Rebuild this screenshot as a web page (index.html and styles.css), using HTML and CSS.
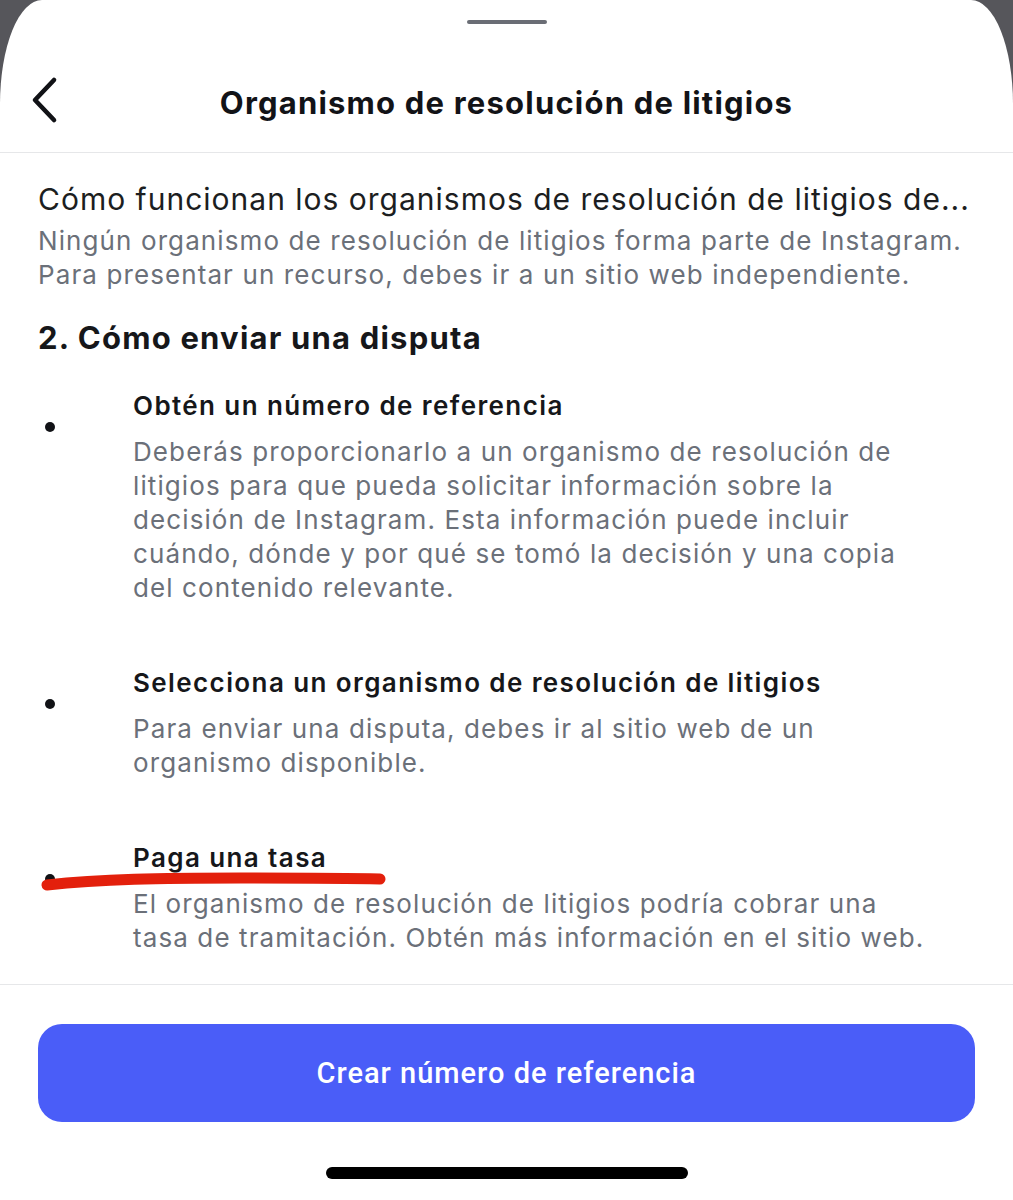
FILE: index.html
```html
<!DOCTYPE html>
<html lang="es">
<head>
<meta charset="utf-8">
<title>Organismo de resolución de litigios</title>
<link rel="stylesheet" href="styles.css">
</head>
<body>
<div class="sheet">
  <div class="grabber"></div>
  <header class="header">
    <button class="back" aria-label="Atrás">
      <svg width="30" height="48" viewBox="0 0 30 48"><path d="M24 4 L5 24 L24 44" fill="none" stroke="#111216" stroke-width="4.6" stroke-linecap="round" stroke-linejoin="round"/></svg>
    </button>
    <h1 class="title">Organismo de resolución de litigios</h1>
  </header>
  <main class="content">
    <p class="lead">Cómo funcionan los organismos de resolución de litigios de...</p>
    <p class="sub">Ningún organismo de resolución de litigios forma parte de Instagram.<br>Para presentar un recurso, debes ir a un sitio web independiente.</p>
    <h2 class="section">2. Cómo enviar una disputa</h2>
    <ul class="steps">
      <li class="step">
        <span class="dot"></span>
        <div class="step-body">
          <h3 class="step-title">Obtén un número de referencia</h3>
          <p class="step-text">Deberás proporcionarlo a un organismo de resolución de<br>litigios para que pueda solicitar información sobre la<br>decisión de Instagram. Esta información puede incluir<br>cuándo, dónde y por qué se tomó la decisión y una copia<br>del contenido relevante.</p>
        </div>
      </li>
      <li class="step">
        <span class="dot"></span>
        <div class="step-body">
          <h3 class="step-title">Selecciona un organismo de resolución de litigios</h3>
          <p class="step-text">Para enviar una disputa, debes ir al sitio web de un<br>organismo disponible.</p>
        </div>
      </li>
      <li class="step">
        <span class="dot"></span>
        <div class="step-body">
          <h3 class="step-title">Paga una tasa</h3>
          <p class="step-text">El organismo de resolución de litigios podría cobrar una<br>tasa de tramitación. Obtén más información en el sitio web.</p>
        </div>
        <svg class="scribble" width="345" height="22" viewBox="0 0 345 22"><path d="M6 15 C 60 9, 120 8, 200 8 S 300 8, 339 9" fill="none" stroke="#e3200c" stroke-width="11" stroke-linecap="round"/></svg>
      </li>
    </ul>
  </main>
  <footer class="footer">
    <button class="cta">Crear número de referencia</button>
    <div class="home"></div>
  </footer>
</div>
</body>
</html>
```
FILE: styles.css
```css
html, body {
  margin: 0;
  padding: 0;
  background: #56565b;
}
.sheet {
  width: 1013px;
  height: 1200px;
  background: #ffffff;
  border-top-left-radius: 42px 104px;
  border-top-right-radius: 42px 104px;
  overflow: hidden;
  display: flex;
  flex-direction: column;
  font-family: Inter, "Noto Sans", sans-serif;
  color: #1c1e21;
}
.grabber {
  width: 80px;
  height: 4px;
  border-radius: 2px;
  background: #6a6d75;
  margin: 20px auto 0;
}
.header {
  position: relative;
  height: 128px;
  display: flex;
  align-items: center;
  justify-content: center;
  border-bottom: 1.5px solid #e6e7e9;
}
.back {
  position: absolute;
  left: 30px;
  top: 52px;
  padding: 0;
  border: 0;
  background: none;
  display: flex;
}
.title {
  margin: 28px 0 0;
  font-family: Inter, sans-serif;
  font-weight: 700;
  font-size: 31px;
  color: #121317;
  letter-spacing: 1.2px;
  white-space: nowrap;
}
.content {
  flex: 1;
  padding: 0 38px;
}
.lead {
  margin: 27px 0 0;
  font-size: 30px;
  line-height: 38px;
  letter-spacing: 1px;
  white-space: nowrap;
  color: #1c1e21;
}
.sub {
  margin: 6px 0 0;
  font-size: 26px;
  line-height: 34px;
  letter-spacing: 1.1px;
  white-space: nowrap;
  color: #6b7079;
}
.section {
  margin: 26px 0 0;
  font-size: 31px;
  font-weight: 700;
  line-height: 40px;
  letter-spacing: 1.2px;
  color: #16171a;
}
.steps {
  list-style: none;
  margin: 28px 0 0;
  padding: 0;
  display: flex;
  flex-direction: column;
  gap: 58px;
}
.step {
  position: relative;
  display: flex;
}
.dot {
  width: 10px;
  height: 10px;
  border-radius: 50%;
  background: #111216;
  margin: 36px 0 0 7px;
  flex: none;
}
.step-body {
  margin-left: 78px;
}
.step-title {
  margin: 0;
  font-size: 26px;
  font-weight: 600;
  line-height: 40px;
  letter-spacing: 1.4px;
  white-space: nowrap;
  color: #16171a;
}
.step-text {
  margin: 9px 0 0;
  font-size: 26px;
  line-height: 34px;
  letter-spacing: 1.1px;
  white-space: nowrap;
  color: #6b7079;
}
.scribble {
  position: absolute;
  left: 3px;
  top: 32px;
}
.footer {
  border-top: 1.5px solid #e6e7e9;
  padding: 39px 38px 0;
  height: 176px;
  display: flex;
  flex-direction: column;
  align-items: center;
}
.cta {
  width: 100%;
  height: 98px;
  border: 0;
  border-radius: 24px;
  background: #4a5df8;
  color: #ffffff;
  font-family: Roboto, sans-serif;
  font-weight: 500;
  font-size: 29px;
  letter-spacing: 1px;
}
.home {
  width: 362px;
  height: 12px;
  border-radius: 6px;
  background: #000;
  margin-top: 45px;
}
```
